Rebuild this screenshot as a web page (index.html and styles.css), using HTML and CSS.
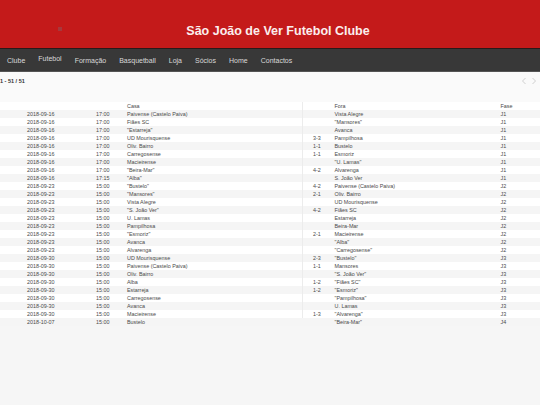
FILE: index.html
```html
<!DOCTYPE html>
<html lang="pt">
<head>
    <meta charset="UTF-8">
    <title>São João de Ver Futebol Clube</title>
    <link rel="stylesheet" href="styles.css">
</head>
<body>
    <header class="banner">
        <span class="logo"></span>
        <h1 class="title">São João de Ver Futebol Clube</h1>
    </header>
    <nav class="menu">
        <a href="#">Clube</a>
        <a href="#" class="active">Futebol</a>
        <a href="#">Formação</a>
        <a href="#">Basquetball</a>
        <a href="#">Loja</a>
        <a href="#">Sócios</a>
        <a href="#">Home</a>
        <a href="#">Contactos</a>
    </nav>
    <div class="pager">
        <span class="count">1 - 51 / 51</span>
        <span class="arrows">
            <svg viewBox="0 0 6 8" width="6" height="8"><path d="M4.5 1 1.5 4l3 3" /></svg>
            <svg viewBox="0 0 6 8" width="6" height="8"><path d="M1.5 1l3 3-3 3" /></svg>
        </span>
    </div>
    <table class="games">
        <thead>
            <tr><th></th><th></th><th>Casa</th><th></th><th>Fora</th><th>Fase</th></tr>
        </thead>
        <tbody>
            <tr><td>2018-09-16</td><td>17:00</td><td>Paivense (Castelo Paiva)</td><td></td><td>Vista Alegre</td><td>J1</td></tr>
            <tr><td>2018-09-16</td><td>17:00</td><td>Fiães SC</td><td></td><td>"Mansores"</td><td>J1</td></tr>
            <tr><td>2018-09-16</td><td>17:00</td><td>"Estarreja"</td><td></td><td>Avanca</td><td>J1</td></tr>
            <tr><td>2018-09-16</td><td>17:00</td><td>UD Mourisquense</td><td>3-3</td><td>Pampilhosa</td><td>J1</td></tr>
            <tr><td>2018-09-16</td><td>17:00</td><td>Oliv. Bairro</td><td>1-1</td><td>Bustelo</td><td>J1</td></tr>
            <tr><td>2018-09-16</td><td>17:00</td><td>Carregosense</td><td>1-1</td><td>Esmoriz</td><td>J1</td></tr>
            <tr><td>2018-09-16</td><td>17:00</td><td>Macieirense</td><td></td><td>"U. Lamas"</td><td>J1</td></tr>
            <tr><td>2018-09-16</td><td>17:00</td><td>"Beira-Mar"</td><td>4-2</td><td>Alvarenga</td><td>J1</td></tr>
            <tr><td>2018-09-16</td><td>17:15</td><td>"Alba"</td><td></td><td>S. João Ver</td><td>J1</td></tr>
            <tr><td>2018-09-23</td><td>15:00</td><td>"Bustelo"</td><td>4-2</td><td>Paivense (Castelo Paiva)</td><td>J2</td></tr>
            <tr><td>2018-09-23</td><td>15:00</td><td>"Mansores"</td><td>2-1</td><td>Oliv. Bairro</td><td>J2</td></tr>
            <tr><td>2018-09-23</td><td>15:00</td><td>Vista Alegre</td><td></td><td>UD Mourisquense</td><td>J2</td></tr>
            <tr><td>2018-09-23</td><td>15:00</td><td>"S. João Ver"</td><td>4-2</td><td>Fiães SC</td><td>J2</td></tr>
            <tr><td>2018-09-23</td><td>15:00</td><td>U. Lamas</td><td></td><td>Estarreja</td><td>J2</td></tr>
            <tr><td>2018-09-23</td><td>15:00</td><td>Pampilhosa</td><td></td><td>Beira-Mar</td><td>J2</td></tr>
            <tr><td>2018-09-23</td><td>15:00</td><td>"Esmoriz"</td><td>2-1</td><td>Macieirense</td><td>J2</td></tr>
            <tr><td>2018-09-23</td><td>15:00</td><td>Avanca</td><td></td><td>"Alba"</td><td>J2</td></tr>
            <tr><td>2018-09-23</td><td>15:00</td><td>Alvarenga</td><td></td><td>"Carregosense"</td><td>J2</td></tr>
            <tr><td>2018-09-30</td><td>15:00</td><td>UD Mourisquense</td><td>2-3</td><td>"Bustelo"</td><td>J3</td></tr>
            <tr><td>2018-09-30</td><td>15:00</td><td>Paivense (Castelo Paiva)</td><td>1-1</td><td>Mansores</td><td>J3</td></tr>
            <tr><td>2018-09-30</td><td>15:00</td><td>Oliv. Bairro</td><td></td><td>"S. João Ver"</td><td>J3</td></tr>
            <tr><td>2018-09-30</td><td>15:00</td><td>Alba</td><td>1-2</td><td>"Fiães SC"</td><td>J3</td></tr>
            <tr><td>2018-09-30</td><td>15:00</td><td>Estarreja</td><td>1-2</td><td>"Esmoriz"</td><td>J3</td></tr>
            <tr><td>2018-09-30</td><td>15:00</td><td>Carregosense</td><td></td><td>"Pampilhosa"</td><td>J3</td></tr>
            <tr><td>2018-09-30</td><td>15:00</td><td>Avanca</td><td></td><td>U. Lamas</td><td>J3</td></tr>
            <tr><td>2018-09-30</td><td>15:00</td><td>Macieirense</td><td>1-3</td><td>"Alvarenga"</td><td>J3</td></tr>
            <tr><td>2018-10-07</td><td>15:00</td><td>Bustelo</td><td></td><td>"Beira-Mar"</td><td>J4</td></tr>
        </tbody>
    </table>
</body>
</html>
```

FILE: styles.css
```css
body {
    margin: 0;
    height: 405px;
    overflow: hidden;
    background: #f6f6f6;
    color: #333;
    font-family: "Liberation Sans", Arial, sans-serif;
}

.banner {
    display: flex;
    align-items: center;
    justify-content: center;
    position: relative;
    height: 49px;
    padding: 13px 0 0 16px;
    box-sizing: border-box;
    background: #c41a1a;
    border-bottom: 1px solid #2a1a1a;
}

.logo {
    position: absolute;
    left: 58px;
    top: 27px;
    width: 4px;
    height: 4px;
    background: #a8383c;
}

.title {
    margin: 0;
    font-size: 12.5px;
    font-weight: bold;
    color: #fbeeee;
}

.menu {
    display: flex;
    align-items: center;
    gap: 13px;
    height: 21px;
    padding: 1px 0 0 7px;
    background: #383838;
    border-bottom: 1px solid #555;
}

.menu a {
    color: #d8d8d8;
    font-size: 7px;
    text-decoration: none;
}

.menu .active {
    position: relative;
    top: -2px;
}

.pager {
    display: flex;
    justify-content: space-between;
    height: 30px;
    padding: 5px 3px 0 0;
    box-sizing: border-box;
    background: #fafafa;
}

.count {
    font-size: 5.5px;
    font-weight: bold;
    line-height: 8px;
}

.arrows {
    display: flex;
    gap: 4px;
}

.arrows path {
    fill: none;
    stroke: #d0d0d0;
    stroke-width: 1;
}

.games {
    width: 540px;
    table-layout: fixed;
    border-collapse: collapse;
    font-size: 5.4px;
    color: #4a4a4a;
}

.games th,
.games td {
    height: 8px;
    padding: 0;
    font-weight: normal;
    text-align: left;
    white-space: nowrap;
    line-height: 8px;
}

.games th:nth-child(1),
.games td:nth-child(1) {
    width: 96px;
    padding-left: 27px;
    box-sizing: border-box;
}

.games th:nth-child(2),
.games td:nth-child(2) {
    width: 31px;
}

.games th:nth-child(3),
.games td:nth-child(3) {
    width: 175px;
    border-right: 1px solid #ececec;
}

.games tbody tr:last-child td:nth-child(3) {
    border-right-color: transparent;
}

.games th:nth-child(4),
.games td:nth-child(4) {
    width: 32px;
    padding-left: 10px;
    box-sizing: border-box;
}

.games th:nth-child(5),
.games td:nth-child(5) {
    width: 166px;
}

.games thead tr {
    background: #fff;
}

.games tbody tr:nth-child(odd) {
    background: #f5f5f5;
}

.games tbody tr:nth-child(even) {
    background: #fff;
}
```
